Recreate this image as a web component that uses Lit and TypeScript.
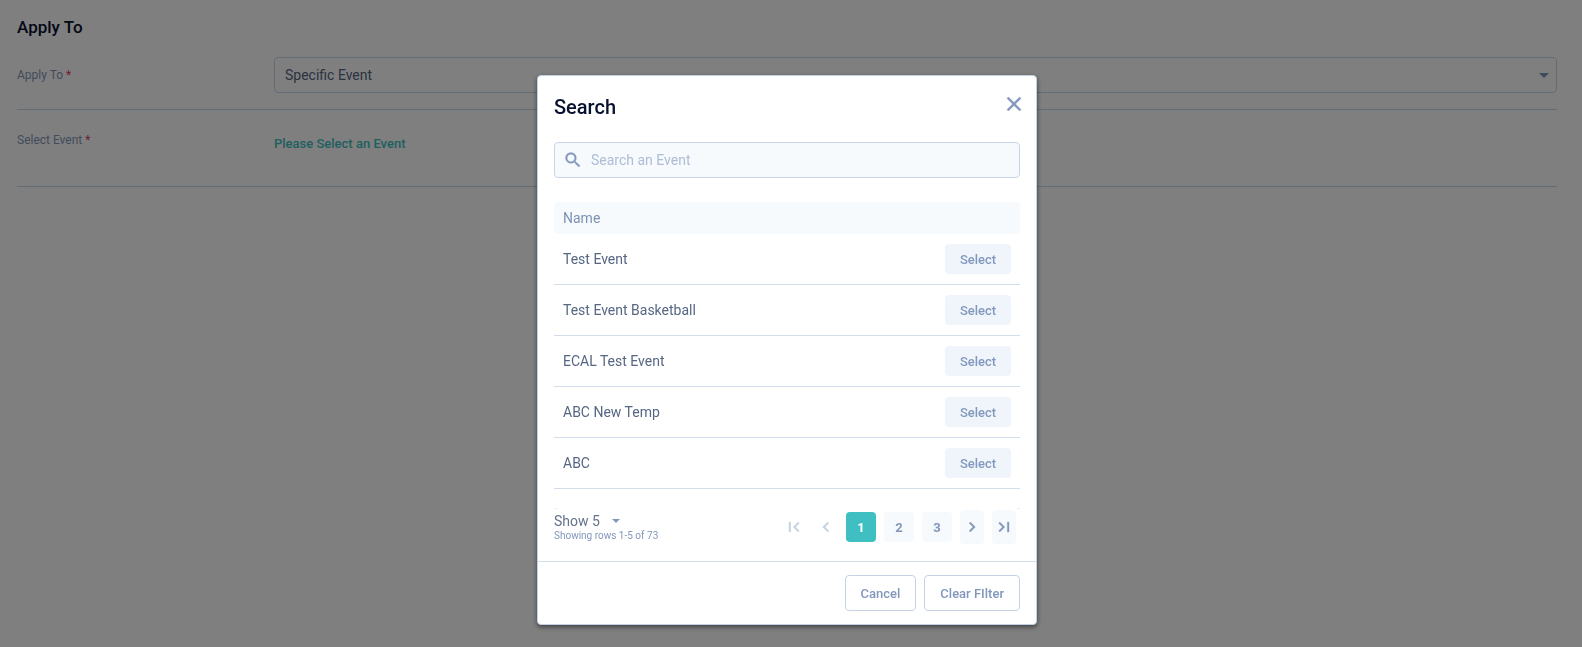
import { LitElement, html, css, svg } from "lit";
import { customElement, property, state } from "lit/decorators.js";
import { classMap } from "lit/directives/class-map.js";

const EVENTS = ["Test Event", "Test Event Basketball", "ECAL Test Event", "ABC New Temp", "ABC"];

const caret = (w: number, h: number) => html`<svg class="caret" width=${w} height=${h} viewBox="0 0 10 5" aria-hidden="true">
  <path d="M0 0h10L5 5z" fill="currentColor" />
</svg>`;

const icons: Record<string, unknown> = {
  first: svg`<path d="M18.41 16.59 13.82 12l4.59-4.59L17 6l-6 6 6 6zM6 6h2v12H6z" />`,
  prev: svg`<path d="M15.41 7.41 14 6l-6 6 6 6 1.41-1.41L10.83 12z" />`,
  next: svg`<path d="M10 6 8.59 7.41 13.17 12l-4.58 4.59L10 18l6-6z" />`,
  last: svg`<path d="M5.59 7.41 10.18 12l-4.59 4.59L7 18l6-6-6-6zM16 6h2v12h-2z" />`,
  search: svg`<path d="M15.5 14h-.79l-.28-.27A6.47 6.47 0 0 0 16 9.5 6.5 6.5 0 1 0 9.5 16c1.61 0 3.09-.59 4.23-1.57l.27.28v.79l5 4.99L20.49 19l-4.99-5zm-6 0C7.01 14 5 11.99 5 9.5S7.01 5 9.5 5 14 7.01 14 9.5 11.99 14 9.5 14z" />`,
  close: svg`<path d="M19 6.41 17.59 5 12 10.59 6.41 5 5 6.41 10.59 12 5 17.59 6.41 19 12 13.41 17.59 19 19 17.59 13.41 12z" />`,
};

const icon = (name: string, size: number) =>
  html`<svg width=${size} height=${size} viewBox="0 0 24 24" fill="currentColor" stroke="currentColor" stroke-width="0.4" aria-hidden="true">${icons[name]}</svg>`;

const base = css`
  * { box-sizing: border-box; }
  button, input, select { font: inherit; margin: 0; }
  button { cursor: pointer; padding: 0; border: 0; background: none; color: inherit; }
  svg { display: block; flex: none; }
`;

@customElement("event-search-dialog")
export class EventSearchDialog extends LitElement {
  @property({ type: Array }) events: string[] = [];
  @state() private page = 1;

  static styles = [base, css`
    :host { display: block; width: 500px; max-width: 100%; }
    .dialog {
      background: #fff;
      border: 1px solid #c1d0e2;
      border-radius: 4px;
      box-shadow: 0 2px 5px rgba(0, 0, 0, 0.5);
      color: #8297bb;
    }
    .body { padding: 16px; }
    .head { display: flex; justify-content: space-between; align-items: flex-start; height: 50px; }
    .title { margin: 0; padding-top: 2px; font-size: 20px; line-height: 26px; font-weight: 500; color: #07112e; }
    .close { margin-right: -6px; }
    .search {
      display: flex;
      align-items: center;
      gap: 8px;
      height: 36px;
      padding: 0 8px;
      border: 1px solid #c6d6e6;
      border-radius: 4px;
      background: #f6fafd;
    }
    .search input { flex: 1; min-width: 0; border: 0; padding: 0; outline: 0; background: none; color: #566683; font-size: 14px; }
    .search input::placeholder { color: #aebcd4; opacity: 1; }
    .list { width: 100%; margin-top: 24px; border-collapse: separate; border-spacing: 0; font-size: 14px; color: #566683; }
    .list th { height: 32px; padding: 0 9px; background: #f6fafd; color: #7c92b4; font-weight: 400; text-align: left; }
    .list th:first-child { border-radius: 4px 0 0 4px; }
    .list th:last-child { border-radius: 0 4px 4px 0; }
    .list td { height: 51px; padding: 0 9px; border-bottom: 1px solid #d0deec; }
    .list .action { width: 84px; }
    .select { display: block; width: 66px; height: 30px; border-radius: 4px; background: #f0f5fc; color: #8299bd; font-size: 13px; font-weight: 500; }
    .pager {
      display: flex;
      justify-content: space-between;
      align-items: center;
      margin-top: 19px;
      padding-right: 4px;
      border-top: 1px solid;
      border-image: linear-gradient(90deg, #e9eef3 4px, transparent 4px calc(100% - 4px), #e9eef3 calc(100% - 4px)) 1;
    }
    .size { position: relative; display: flex; align-items: center; color: #63718c; font-size: 14px; line-height: 18px; }
    .size select { appearance: none; border: 0; padding: 0 20px 0 0; background: none; color: inherit; }
    .size .caret { position: absolute; right: 0; color: #8297bb; }
    .summary { display: block; font-size: 10px; line-height: 12px; }
    .rows { display: flex; flex-direction: column; align-items: flex-start; }
    .pages { display: flex; align-items: center; gap: 8px; height: 36px; }
    .step { display: grid; place-items: center; width: 24px; height: 34px; border-radius: 4px; background: #f6fafd; color: #8297bb; }
    .step:disabled { background: none; color: #c3d1e2; }
    .page { width: 30px; height: 30px; border-radius: 4px; background: #f6fafd; font-size: 13px; font-weight: 700; }
    .page.current { background: #3fbfc1; color: #fff; }
    .foot { display: flex; justify-content: flex-end; gap: 8px; padding: 13px 16px; border-top: 1px solid #d0deec; }
    .outline { height: 36px; padding: 0 15px; border: 1px solid #c6d3e5; border-radius: 4px; font-size: 13px; font-weight: 500; }
  `];

  render() {
    return html`
      <section class="dialog" role="dialog" aria-modal="true" aria-labelledby="title">
        <div class="body">
          <header class="head">
            <h2 class="title" id="title">Search</h2>
            <button class="close" aria-label="Close">${icon("close", 24)}</button>
          </header>
          <label class="search">
            ${icon("search", 20)}
            <input type="text" placeholder="Search an Event" aria-label="Search an Event" />
          </label>
          <table class="list">
            <thead><tr><th scope="col">Name</th><th class="action"></th></tr></thead>
            <tbody>
              ${this.events.map((name) => html`<tr>
                <td>${name}</td>
                <td class="action"><button class="select">Select</button></td>
              </tr>`)}
            </tbody>
          </table>
          <div class="pager">
            <div class="rows">
              <div class="size">
                <select aria-label="Rows per page"><option>Show 5</option></select>
                ${caret(8, 4)}
              </div>
              <span class="summary">Showing rows 1-5 of 73</span>
            </div>
            <nav class="pages" aria-label="Pages">
              <button class="step" aria-label="First page" ?disabled=${this.page === 1}>${icon("first", 20)}</button>
              <button class="step" aria-label="Previous page" ?disabled=${this.page === 1}>${icon("prev", 20)}</button>
              ${[1, 2, 3].map((n) => html`<button
                class=${classMap({ page: true, current: n === this.page })}
                @click=${() => { this.page = n; }}>${n}</button>`)}
              <button class="step" aria-label="Next page">${icon("next", 20)}</button>
              <button class="step" aria-label="Last page">${icon("last", 20)}</button>
            </nav>
          </div>
        </div>
        <footer class="foot">
          <button class="outline">Cancel</button>
          <button class="outline">Clear FIlter</button>
        </footer>
      </section>
    `;
  }
}

@customElement("app-root")
export class AppRoot extends LitElement {
  static styles = [base, css`
    :host { display: block; min-height: 100vh; font-family: Roboto, "Liberation Sans", sans-serif; background: #fff; }
    .page { padding: 17px 25px 0 17px; }
    .title { margin: 0; font-size: 17px; line-height: 20px; font-weight: 500; color: #07112e; }
    .row { display: grid; grid-template-columns: 257px 1fr; border-bottom: 1px solid #c3d9ea; }
    .row.choice { align-items: center; padding: 20px 0 16px; }
    .row.event { padding: 22px 0 34px; }
    .label { font-size: 12px; line-height: 16px; color: #8297bb; }
    .required { color: #e5395b; }
    .field { position: relative; display: flex; align-items: center; }
    .field select { appearance: none; width: 100%; height: 36px; padding: 0 10px; border: 1px solid #c3d9ea; border-radius: 4px; background: none; color: #566683; font-size: 14px; }
    .field .caret { position: absolute; right: 8px; color: #7c96bd; pointer-events: none; }
    .pick { justify-self: start; padding-top: 4px; font-size: 13px; line-height: 16px; font-weight: 500; color: #3fbfc1; }
    .overlay { position: fixed; inset: 0; display: flex; justify-content: center; align-items: flex-start; padding: 75px 8px 0 0; overflow: auto; background: rgba(0, 0, 0, 0.5); }
  `];

  render() {
    return html`
      <main class="page">
        <h1 class="title">Apply To</h1>
        <div class="row choice">
          <label class="label" for="apply">Apply To <span class="required">*</span></label>
          <div class="field">
            <select id="apply"><option>Specific Event</option></select>
            ${caret(10, 5)}
          </div>
        </div>
        <div class="row event">
          <label class="label" for="pick">Select Event <span class="required">*</span></label>
          <button class="pick" id="pick">Please Select an Event</button>
        </div>
      </main>
      <div class="overlay"><event-search-dialog .events=${EVENTS}></event-search-dialog></div>
    `;
  }
}
